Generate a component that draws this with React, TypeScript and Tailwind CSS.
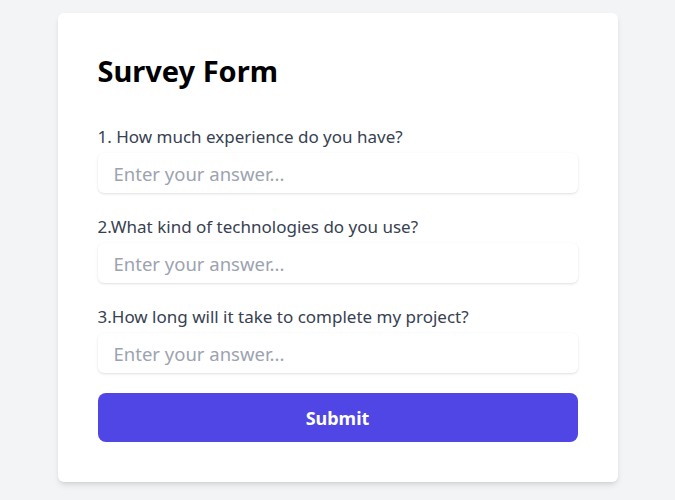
const questions = [
  "1. How much experience do you have?",
  "2.What kind of technologies do you use?",
  "3.How long will it take to complete my project?",
];

export default function App() {
  return (
    <div className="min-h-[500px] bg-[#f3f4f6] pt-[13px] font-['Noto_Sans',sans-serif]">
      <form
        className="mx-auto w-[560px] rounded-md bg-white p-10 shadow-md"
        onSubmit={(e) => e.preventDefault()}
      >
        <h1 className="mb-[34px] text-[29px] leading-9 font-bold text-black">Survey Form</h1>

        <div className="flex flex-col gap-5">
          {questions.map((q, i) => (
            <div key={i}>
              <label className="mb-[2px] block text-[17px] leading-7 text-[#374151]">{q}</label>
              <input
                type="text"
                placeholder="Enter your answer..."
                className="block h-10 w-full rounded-md bg-white px-4 text-[18.5px] text-[#374151] shadow-sm outline-none placeholder:text-[#9ca3af]"
              />
            </div>
          ))}
        </div>

        <button
          type="submit"
          className="mt-5 block h-[49px] w-full rounded-lg bg-[#4f46e5] text-lg font-bold text-white"
        >
          Submit
        </button>
      </form>
    </div>
  );
}
